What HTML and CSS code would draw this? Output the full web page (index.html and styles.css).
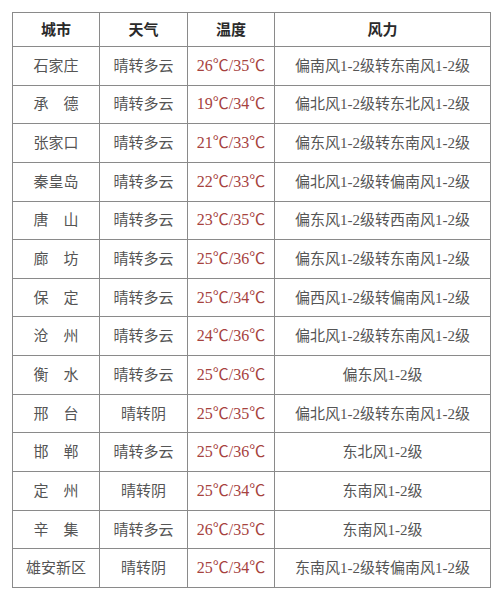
FILE: index.html
```html
<!DOCTYPE html>
<html lang="zh-CN">
<head>
<meta charset="utf-8">
<title>天气预报</title>
<link rel="stylesheet" href="styles.css">
</head>
<body>
<table class="weather">
  <colgroup>
    <col class="c-city"><col class="c-sky"><col class="c-temp"><col class="c-wind">
  </colgroup>
  <thead>
    <tr><th>城市</th><th>天气</th><th>温度</th><th>风力</th></tr>
  </thead>
  <tbody>
    <tr><td>石家庄</td><td>晴转多云</td><td class="temp">26℃/35℃</td><td>偏南风1-2级转东南风1-2级</td></tr>
    <tr><td>承　德</td><td>晴转多云</td><td class="temp">19℃/34℃</td><td>偏北风1-2级转东北风1-2级</td></tr>
    <tr><td>张家口</td><td>晴转多云</td><td class="temp">21℃/33℃</td><td>偏东风1-2级转东南风1-2级</td></tr>
    <tr><td>秦皇岛</td><td>晴转多云</td><td class="temp">22℃/33℃</td><td>偏北风1-2级转偏南风1-2级</td></tr>
    <tr><td>唐　山</td><td>晴转多云</td><td class="temp">23℃/35℃</td><td>偏东风1-2级转西南风1-2级</td></tr>
    <tr><td>廊　坊</td><td>晴转多云</td><td class="temp">25℃/36℃</td><td>偏东风1-2级转东南风1-2级</td></tr>
    <tr><td>保　定</td><td>晴转多云</td><td class="temp">25℃/34℃</td><td>偏西风1-2级转偏南风1-2级</td></tr>
    <tr><td>沧　州</td><td>晴转多云</td><td class="temp">24℃/36℃</td><td>偏北风1-2级转东南风1-2级</td></tr>
    <tr><td>衡　水</td><td>晴转多云</td><td class="temp">25℃/36℃</td><td>偏东风1-2级</td></tr>
    <tr><td>邢　台</td><td>晴转阴</td><td class="temp">25℃/35℃</td><td>偏北风1-2级转东南风1-2级</td></tr>
    <tr><td>邯　郸</td><td>晴转多云</td><td class="temp">25℃/36℃</td><td>东北风1-2级</td></tr>
    <tr><td>定　州</td><td>晴转阴</td><td class="temp">25℃/34℃</td><td>东南风1-2级</td></tr>
    <tr><td>辛　集</td><td>晴转多云</td><td class="temp">26℃/35℃</td><td>东南风1-2级</td></tr>
    <tr><td>雄安新区</td><td>晴转阴</td><td class="temp">25℃/34℃</td><td>东南风1-2级转偏南风1-2级</td></tr>
  </tbody>
</table>
</body>
</html>
```

FILE: styles.css
```css
html, body {
  margin: 0;
  padding: 0;
  background: #ffffff;
}

body {
  padding: 12px 0 0 12px;
  font-family: "Liberation Serif", "Noto Sans CJK SC", serif;
  color: #555555;
}

.weather {
  border-collapse: collapse;
  table-layout: fixed;
  width: 478px;
}

.c-city { width: 87px; }
.c-sky { width: 88px; }
.c-temp { width: 87px; }
.c-wind { width: 216px; }

.weather th,
.weather td {
  border: 1px solid #8a8a8a;
  text-align: center;
  vertical-align: middle;
  padding: 0;
  white-space: nowrap;
  font-size: 15px;
  line-height: 18px;
}

.weather th {
  height: 33px;
  font-weight: bold;
  color: #2a2a2a;
}

.weather td {
  height: 37.65px;
}

.weather td.temp {
  color: #a6423e;
  font-size: 16px;
}
```
